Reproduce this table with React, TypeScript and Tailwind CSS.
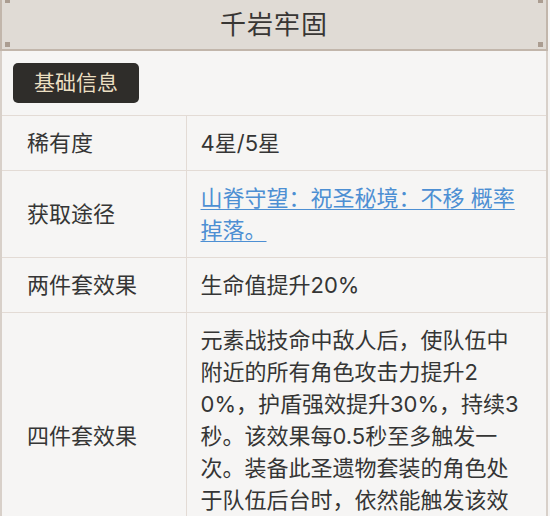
import React from 'react';

const rows: { label: string; value: React.ReactNode }[] = [
  { label: '稀有度', value: '4星/5星' },
  {
    label: '获取途径',
    value: (
      <a href="#" className="text-[#4d8fd3] underline underline-offset-[3px] decoration-1">
        山脊守望：祝圣秘境：不移 概率掉落。
      </a>
    ),
  },
  { label: '两件套效果', value: '生命值提升20%' },
  {
    label: '四件套效果',
    value:
      '元素战技命中敌人后，使队伍中附近的所有角色攻击力提升20%，护盾强效提升30%，持续3秒。该效果每0.5秒至多触发一次。装备此圣遗物套装的角色处于队伍后台时，依然能触发该效果。',
  },
];

// little square rivets on the title bar corners
const Corner = ({ className }: { className: string }) => (
  <span className={`absolute w-[5px] h-[5px] bg-[#ab9d91] ${className}`} />
);

export default function App() {
  return (
    <div className="w-[550px] h-[516px] overflow-hidden bg-[#f6f5f4] font-['Inter','Noto_Sans_CJK_SC',sans-serif] text-[#353535]">
      <div className="relative h-[51px] mr-[2px] bg-[#e0dbd5] border-x-2 border-b-2 border-[#c2b6ab] flex items-center justify-center">
        <h1 className="text-[26px] text-[#383634] tracking-[1px]">千岩牢固</h1>
        <Corner className="left-[3px] -top-[2px]" />
        <Corner className="left-[3px] bottom-[2px]" />
        <Corner className="right-[3px] -top-[2px]" />
        <Corner className="right-[3px] bottom-[2px]" />
      </div>

      <div className="mr-[2px] border-x-2 border-[#d8d0c9]">
        <div className="flex px-[11px] pt-[12px] pb-[12px]">
          <span className="inline-flex items-center h-[40px] px-[21px] rounded-[5px] bg-[#2f2d2a] text-[#ebdfc2] text-[21px]">
            基础信息
          </span>
        </div>

        <table className="w-full border-collapse text-[22px] leading-[32px]">
          <tbody>
            {rows.map((row) => (
              <tr key={row.label} className="border-t border-[#e3dbd5]">
                <td className="w-[184px] pl-[25px] py-[11px] align-middle border-r border-[#e3dbd5]">
                  {row.label}
                </td>
                <td className="pl-[14px] pr-[22px] py-[11px] align-middle break-all">
                  {row.value}
                </td>
              </tr>
            ))}
          </tbody>
        </table>
      </div>
    </div>
  );
}
